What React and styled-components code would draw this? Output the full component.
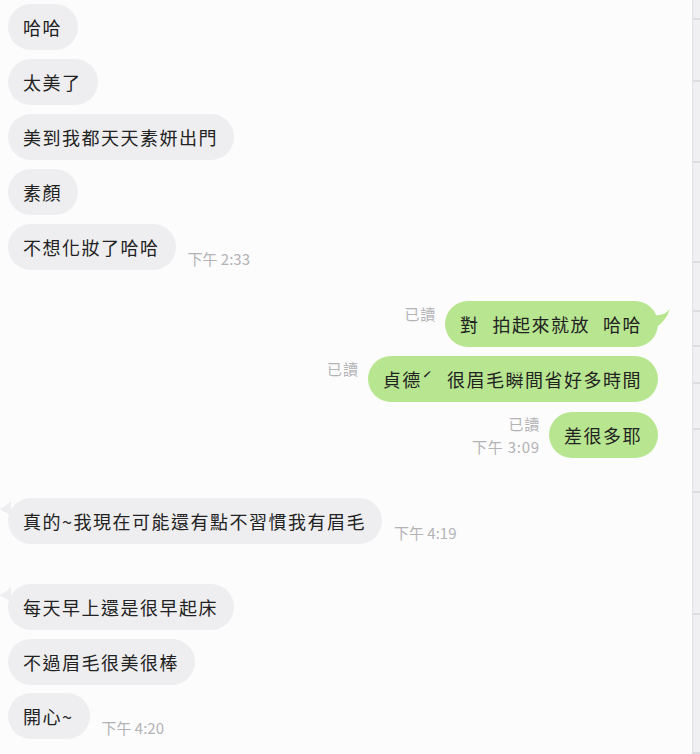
import React from "react";
import styled, { createGlobalStyle } from "styled-components";

const Global = createGlobalStyle`
  html, body { margin: 0; padding: 0; background: #fcfcfd; }
  body { font-family: "Noto Sans CJK TC", "Noto Sans", sans-serif; }
`;

const Page = styled.div`
  display: flex;
  height: 754px;
  width: 700px;
  overflow: hidden;
  background: #fcfcfd;
`;

const Chat = styled.div`
  flex: 1;
  display: flex;
  flex-direction: column;
  padding: 4px 34px 0 8px;
`;

const Row = styled.div`
  display: flex;
  justify-content: ${(p) => (p.$side === "right" ? "flex-end" : "flex-start")};
  align-items: flex-end;
  margin-top: ${(p) => p.$gap}px;
`;

const Bubble = styled.div`
  position: relative;
  height: 46px;
  display: flex;
  align-items: center;
  padding: 0 16px 0 15px;
  border-radius: 23px;
  background: ${(p) => (p.$side === "right" ? "#b8e690" : "#eeeef0")};
  color: #222;
  font-size: 18px;
  letter-spacing: 1.5px;
  white-space: pre;
`;

const Space = styled.span`
  display: inline-block;
  width: ${(p) => p.$w}px;
`;

const Tail = styled.svg`
  position: absolute;
  top: ${(p) => (p.$side === "right" ? "8px" : "2px")};
  ${(p) => (p.$side === "right" ? "right: -12px;" : "left: -9px;")}
`;

const Time = styled.div`
  font-size: 15px;
  line-height: 20px;
  color: #b3b3b6;
  margin: 0 0 1px 12px;
  white-space: nowrap;
`;

const Meta = styled.div`
  align-self: flex-start;
  display: flex;
  flex-direction: column;
  align-items: flex-end;
  padding-top: 1px;
  margin-right: 9px;
  font-size: 15px;
  line-height: 23px;
  letter-spacing: 0.8px;
  color: #b3b3b6;
  white-space: nowrap;
`;

const Strip = styled.div`
  width: 7px;
  display: flex;
  flex-direction: column;
  background: #f0f0f3;
  border-left: 1px solid #e0e0e5;
`;

const Seg = styled.div`
  height: ${(p) => p.$h}px;
  flex-shrink: 0;
  border-bottom: 2px solid #dcdce1;
  box-sizing: border-box;
`;

const messages = [
  { side: "left", text: ["哈哈"], gap: 0 },
  { side: "left", text: ["太美了"], gap: 9 },
  { side: "left", text: ["美到我都天天素妍出門"], gap: 9 },
  { side: "left", text: ["素顏"], gap: 9 },
  { side: "left", text: ["不想化妝了哈哈"], gap: 9, time: "下午 2:33" },
  { side: "right", text: ["對", "拍起來就放", "哈哈"], gap: 31, read: true, tail: true },
  { side: "right", text: ["貞德ˊ", "很眉毛瞬間省好多時間"], gap: 9, read: true },
  { side: "right", text: ["差很多耶"], gap: 9, read: true, time: "下午 3:09" },
  { side: "left", text: ["真的~我現在可能還有點不習慣我有眉毛"], gap: 40, time: "下午 4:19", tail: true },
  { side: "left", text: ["每天早上還是很早起床"], gap: 40, tail: true },
  { side: "left", text: ["不過眉毛很美很棒"], gap: 9 },
  { side: "left", text: ["開心~"], gap: 8, time: "下午 4:20" },
];

const segs = [20, 62, 81, 100, 49, 35, 37, 46, 63, 122, 139];

function TailShape({ side }) {
  if (side === "right") {
    return (
      <Tail $side="right" width="16" height="20" viewBox="0 0 16 20">
        <path d="M0 6 C6 7 12 5 16 0 C13 8 9 14 2 18 Z" fill="#b8e690" />
      </Tail>
    );
  }
  return (
    <Tail $side="left" width="12" height="16" viewBox="0 0 12 16">
      <path d="M12 1 C8 5 4 8 0 9 C4 11 8 13 12 16 Z" fill="#eeeef0" />
    </Tail>
  );
}

export default function App() {
  return (
    <>
      <Global />
      <Page>
        <Chat>
          {messages.map((m, i) => (
            <Row key={i} $side={m.side} $gap={m.gap}>
              {m.side === "right" && (
                <Meta>
                  {m.read && <span>已讀</span>}
                  {m.time && <span>{m.time}</span>}
                </Meta>
              )}
              <Bubble $side={m.side}>
                {m.tail && <TailShape side={m.side} />}
                {m.text.map((part, j) => (
                  <React.Fragment key={j}>
                    {j > 0 && <Space $w={13} />}
                    {part}
                  </React.Fragment>
                ))}
              </Bubble>
              {m.side === "left" && m.time && <Time>{m.time}</Time>}
            </Row>
          ))}
        </Chat>
        <Strip>
          {segs.map((h, i) => (
            <Seg key={i} $h={h} />
          ))}
        </Strip>
      </Page>
    </>
  );
}
